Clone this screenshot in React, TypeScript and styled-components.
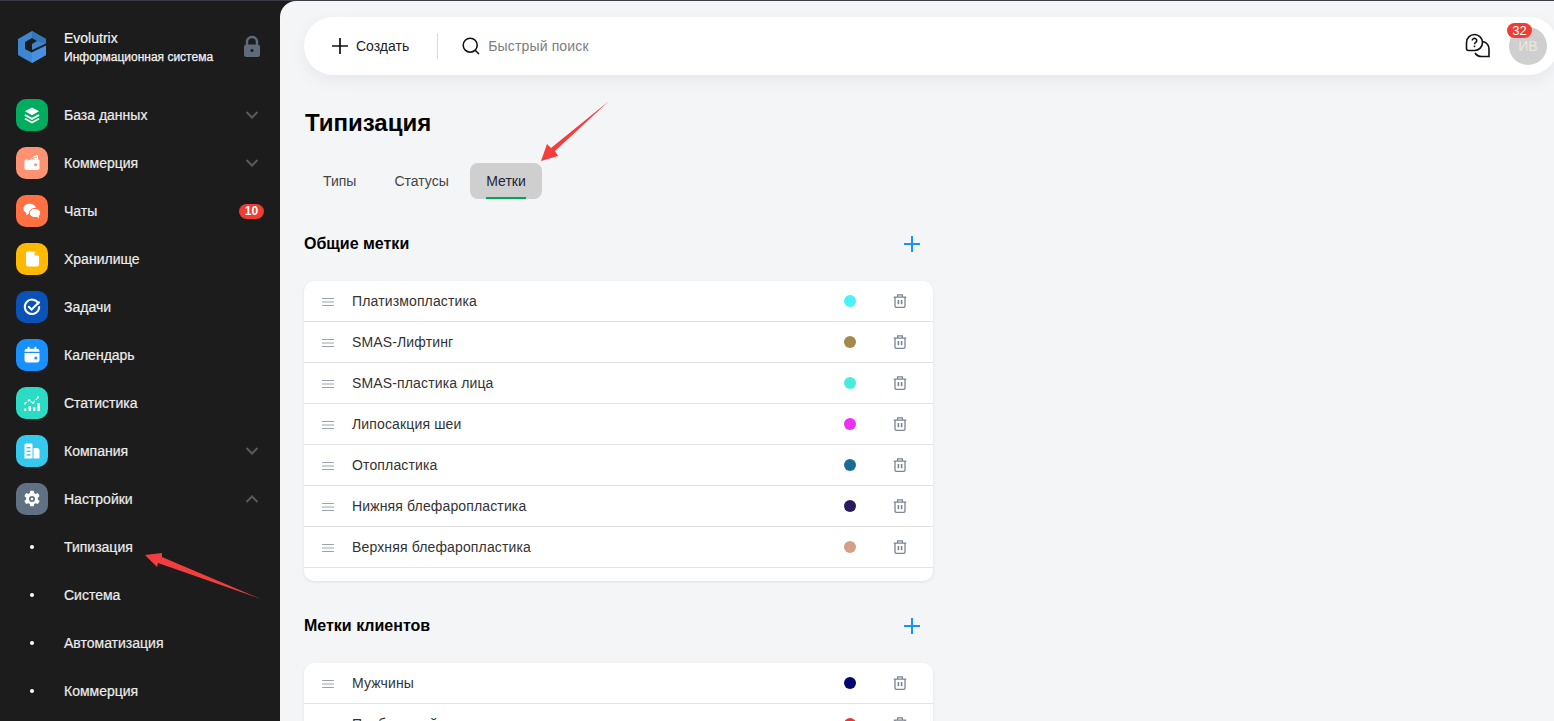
import React from "react";
import styled, { createGlobalStyle } from "styled-components";

const Global = createGlobalStyle`
  html, body { margin: 0; padding: 0; height: 721px; overflow: hidden; background: #1c1c1c; }
  body { font-family: "Liberation Sans", Arial, sans-serif; }
  #root { height: 721px; overflow: hidden; }
  * { box-sizing: border-box; }
`;

const Page = styled.div`
  position: relative;
  display: flex;
  width: 1554px;
  height: 721px;
  overflow: hidden;
  background: #1c1c1c;
  border-top: 1px solid #3b3b45;
`;

const Sidebar = styled.aside`
  flex: 0 0 280px;
  display: flex;
  flex-direction: column;
  padding: 28px 16px 0;
  color: #f2f2f2;
`;

const Brand = styled.div`
  display: flex;
  align-items: center;
  height: 36px;
  margin-bottom: 26px;
`;

const LogoSlot = styled.div`
  flex: 0 0 48px;
  display: flex;
  align-items: center;
`;

const BrandText = styled.div`
  flex: 1;
  display: flex;
  flex-direction: column;
  gap: 4px;
`;

const BrandName = styled.div`
  font-size: 14px;
  line-height: 16px;
  -webkit-text-stroke: 0.2px #f2f2f2;
`;

const BrandSub = styled.div`
  font-size: 12px;
  line-height: 15px;
  -webkit-text-stroke: 0.25px #f2f2f2;
`;

const Nav = styled.nav`
  display: flex;
  flex-direction: column;
`;

const NavRow = styled.div`
  display: flex;
  align-items: center;
  height: 48px;
`;

const IconTile = styled.div<{ $bg: string }>`
  flex: 0 0 32px;
  width: 32px;
  height: 32px;
  margin-right: 16px;
  border-radius: 10px;
  display: flex;
  align-items: center;
  justify-content: center;
  background: ${(p) => p.$bg};
`;

const Bullet = styled.div`
  flex: 0 0 48px;
  display: flex;
  justify-content: center;
  padding-right: 16px;
  &::before {
    content: "";
    width: 4px;
    height: 4px;
    border-radius: 50%;
    background: #fff;
  }
`;

const NavLabel = styled.span`
  flex: 1;
  font-size: 14px;
  color: #ececec;
  -webkit-text-stroke: 0.2px #ececec;
`;

const Chevron = styled.svg`
  width: 16px;
  height: 16px;
  margin-right: 4px;
  fill: none;
  stroke: #5a5a5a;
  stroke-width: 2;
`;

const CountBadge = styled.span`
  min-width: 25px;
  height: 15px;
  border-radius: 8px;
  background: #f03c32;
  color: #fff;
  font-size: 12px;
  font-weight: 700;
  line-height: 15px;
  text-align: center;
`;

const Main = styled.main`
  flex: 1;
  min-width: 0;
  background: #f4f5f7;
  border-top-left-radius: 16px;
  padding: 16px 0 0 24px;
`;

const TopBar = styled.header`
  display: flex;
  align-items: center;
  height: 58px;
  margin-right: -4px;
  padding: 0 0 0 28px;
  background: #fff;
  border-radius: 29px;
  box-shadow: 0 6px 16px rgba(60, 70, 90, 0.07);
`;

const CreateButton = styled.div`
  display: flex;
  align-items: center;
  gap: 8px;
  font-size: 14px;
  color: #1c1c1c;
`;

const Divider = styled.div`
  width: 1px;
  height: 26px;
  margin: 0 24px 0 28px;
  background: #dcdcdc;
`;

const SearchText = styled.span`
  flex: 1;
  margin-left: 8px;
  font-size: 14px;
  letter-spacing: 0.15px;
  color: #7d7d7d;
`;

const HelpIcon = styled.svg`
  width: 26px;
  height: 26px;
  margin-right: 18px;
  fill: none;
  stroke: #111;
  stroke-width: 1.6;
`;

const Avatar = styled.div`
  position: relative;
  width: 38px;
  height: 38px;
  margin-right: 11px;
  border-radius: 50%;
  background: #cfcfcf;
  color: #ece7d8;
  font-size: 14px;
  display: flex;
  align-items: center;
  justify-content: center;
`;

const AvatarBadge = styled.span`
  position: absolute;
  top: -4px;
  left: -2px;
  width: 25px;
  height: 15px;
  border-radius: 8px;
  background: #f03c32;
  color: #fff;
  font-size: 13px;
  line-height: 15px;
  text-align: center;
`;

const Title = styled.h1`
  margin: 33px 0 0 1px;
  font-size: 24px;
  line-height: 30px;
  font-weight: 700;
  color: #000;
`;

const Tabs = styled.div`
  display: flex;
  margin: 25px 0 0 2px;
`;

const Tab = styled.div<{ $active?: boolean }>`
  position: relative;
  height: 36px;
  padding: 0 ${(p) => (p.$active ? "16.5px" : "17px")};
  border-radius: 8px;
  font-size: 14px;
  line-height: 36px;
  color: ${(p) => (p.$active ? "#1d2433" : "#444")};
  background: ${(p) => (p.$active ? "#cfcfcf" : "transparent")};
  margin-right: ${(p) => (p.$active ? 0 : "4px")};
  ${(p) =>
    p.$active
      ? `&::after { content: ""; position: absolute; left: 16px; right: 16px; bottom: 0; height: 2px; background: #00a85a; }`
      : ""}
`;

const Section = styled.section`
  width: 629px;
  margin-top: 35px;
`;

const SectionHead = styled.div`
  display: flex;
  align-items: center;
  justify-content: space-between;
  height: 20px;
  padding-right: 12px;
`;

const SectionTitle = styled.h2`
  margin: 0;
  font-size: 16px;
  line-height: 20px;
  font-weight: 700;
  color: #000;
`;

const PlusIcon = styled.svg`
  width: 18px;
  height: 18px;
  fill: none;
  stroke: #1890ff;
  stroke-width: 2;
`;

const Card = styled.div`
  margin-top: 27px;
  background: #fff;
  border-radius: 10px;
  box-shadow: 0 1px 3px rgba(40, 50, 70, 0.1);
  padding-bottom: 13px;
`;

const Row = styled.div`
  display: flex;
  align-items: center;
  height: 41px;
  border-bottom: 1px solid #e2e2e2;
  padding-left: 18px;
`;

const DragIcon = styled.svg`
  flex: 0 0 12px;
  width: 12px;
  height: 10px;
  margin: 1px 18px 0 0;
  stroke: #9aa4b2;
  stroke-width: 1;
`;

const RowLabel = styled.span`
  flex: 1;
  font-size: 14px;
  letter-spacing: 0.14px;
  color: #333;
`;

const Dot = styled.span<{ $c: string }>`
  width: 12px;
  height: 12px;
  border-radius: 50%;
  background: ${(p) => p.$c};
  margin-right: 37px;
`;

const TrashIcon = styled.svg`
  width: 14px;
  height: 14px;
  margin-right: 26px;
  fill: none;
  stroke: #7b8594;
  stroke-width: 1.3;
`;

const ArrowLayer = styled.svg`
  position: absolute;
  left: 0;
  top: 0;
  width: 1554px;
  height: 721px;
  pointer-events: none;
`;

const W = "#fff";
const Glyph = ({ children }: { children: React.ReactNode }) => (
  <svg width="20" height="20" viewBox="0 0 20 20">{children}</svg>
);

const icons = {
  db: (
    <Glyph>
      <path d="M10 2.5 17 6.3 10 10.2 3 6.3Z" fill={W} />
      <path d="M3.4 9.2 10 12.8l6.6-3.6 1 1.5L10 15 2.4 10.7Z" fill={W} />
      <path d="M3.4 12.9 10 16.4l6.6-3.5 1 1.4L10 18.5 2.4 14.3Z" fill={W} />
    </Glyph>
  ),
  wallet: (
    <Glyph>
      <path d="M7 6.5 14.2 2.2c.9-.5 1.8.1 1.8 1V6.5Z" fill={W} />
      <path d="M4.5 6.5h11.5c1 0 1.5.6 1.5 1.5v7c0 1.2-.8 2-2 2H4.5c-1.2 0-2-.8-2-2V8.5c0-1.2.8-2 2-2Z" fill={W} />
      <path d="M5.5 7.1 14.8 4.2" stroke="#ff9273" strokeWidth="1" />
      <circle cx="13.6" cy="11.8" r="1.5" fill="#ff9273" />
    </Glyph>
  ),
  chat: (
    <Glyph>
      <ellipse cx="7.7" cy="7.7" rx="6.3" ry="5" fill={W} />
      <path d="M4.5 11 4 14.2 8 12Z" fill={W} />
      <ellipse cx="13" cy="12" rx="5.7" ry="4.6" fill={W} stroke="#ff7043" strokeWidth="1" />
      <path d="M15 15.5l1.6 2.3.2-3.4Z" fill={W} />
    </Glyph>
  ),
  file: (
    <Glyph>
      <path d="M5.5 2.5h6.5l4.5 4.5v8.5c0 1.2-.8 2-2 2h-9c-1.2 0-2-.8-2-2v-11c0-1.5.6-2 2-2Z" fill={W} transform="translate(.5 0)" />
      <path d="M12.5 3v3.6h3.6Z" fill="#ffb900" />
    </Glyph>
  ),
  task: (
    <Glyph>
      <path d="M16.4 6.5A7.2 7.2 0 1 0 17.2 10" fill="none" stroke={W} strokeWidth="2" strokeLinecap="round" />
      <path d="M6.8 9.8 9.6 12.5 17 5.2" fill="none" stroke={W} strokeWidth="2" strokeLinecap="round" />
    </Glyph>
  ),
  cal: (
    <Glyph>
      <path d="M2.5 8h15v7c0 1.6-1 2.5-2.5 2.5H5c-1.5 0-2.5-.9-2.5-2.5Z" fill={W} />
      <path d="M5 3.8h10c1.5 0 2.5.9 2.5 2.5v.4h-15v-.4c0-1.6 1-2.5 2.5-2.5Z" fill={W} />
      <rect x="5.6" y="1.8" width="2" height="3.4" rx="1" fill={W} />
      <rect x="12.4" y="1.8" width="2" height="3.4" rx="1" fill={W} />
      <circle cx="13.8" cy="13" r="1.5" fill="#1890ff" />
    </Glyph>
  ),
  stat: (
    <Glyph>
      <path d="M3 10.5 7.3 7l3.6 3 5-5.5" fill="none" stroke={W} strokeWidth="1.1" strokeDasharray="2.2 1.4" />
      <circle cx="3" cy="10.5" r="1.1" fill={W} />
      <circle cx="7.3" cy="7" r="1.1" fill={W} />
      <circle cx="10.9" cy="10" r="1.1" fill={W} />
      <circle cx="16" cy="4.4" r="1.1" fill={W} />
      <rect x="2" y="15.4" width="2.4" height="2.6" rx=".6" fill={W} />
      <rect x="6.6" y="13" width="2.4" height="5" rx=".6" fill={W} />
      <rect x="11" y="14" width="2.4" height="4" rx=".6" fill={W} />
      <rect x="15.4" y="10" width="2.4" height="8" rx=".6" fill={W} />
    </Glyph>
  ),
  comp: (
    <Glyph>
      <path d="M4.5 2.5H9c1 0 1.5.6 1.5 1.5v13.5h-8V4c0-1 .8-1.5 2-1.5Z" fill={W} />
      <rect x="4.6" y="6" width="3.8" height="1.4" fill="#36c9ee" />
      <rect x="4.6" y="9.6" width="3.8" height="1.4" fill="#36c9ee" />
      <rect x="4.6" y="13.2" width="3.8" height="1.4" fill="#36c9ee" />
      <path d="M11.5 7H15c1.6 0 2.5 1 2.5 2.5v8h-6Z" fill={W} />
    </Glyph>
  ),
  gear: (
    <Glyph>
      <path
        fillRule="evenodd"
        d="M8.3 1.8h3.4l.5 2.3 1.5.8 2.2-.8 1.7 3-1.8 1.6v1.7l1.8 1.6-1.7 3-2.2-.8-1.5.8-.5 2.3H8.3l-.5-2.3-1.5-.8-2.2.8-1.7-3 1.8-1.6V8.7L2.4 7.1l1.7-3 2.2.8 1.5-.8ZM10 7a3 3 0 1 0 0 6 3 3 0 0 0 0-6Z"
        fill={W}
      />
      <circle cx="10" cy="10" r="1.3" fill={W} />
    </Glyph>
  ),
};

const Down = () => (
  <Chevron viewBox="0 0 16 16"><path d="M2.5 5 8 10.5 13.5 5" /></Chevron>
);
const Up = () => (
  <Chevron viewBox="0 0 16 16"><path d="M2.5 11 8 5.5 13.5 11" /></Chevron>
);

const Drag = () => (
  <DragIcon viewBox="0 0 12 10">
    <path d="M0 1.5h12M0 5h12M0 8.5h12" />
  </DragIcon>
);

const Trash = () => (
  <TrashIcon viewBox="0 0 14 14">
    <path d="M.7 3.2h12.6M4.6 3V.9h4.8V3M2 3.2v8.8c0 .9.6 1.4 1.5 1.4h7c.9 0 1.5-.5 1.5-1.4V3.2" />
    <path d="M5.4 6v4.2M8.6 6v4.2" strokeWidth="1.6" />
  </TrashIcon>
);

const Plus = () => (
  <PlusIcon viewBox="0 0 18 18"><path d="M9 1v16M1 9h16" /></PlusIcon>
);

const nav: { label: string; bg: string; icon: React.ReactNode; chev?: "d" | "u"; badge?: string }[] = [
  { label: "База данных", bg: "#00ad5f", icon: icons.db, chev: "d" },
  { label: "Коммерция", bg: "#ff9273", icon: icons.wallet, chev: "d" },
  { label: "Чаты", bg: "#ff7043", icon: icons.chat, badge: "10" },
  { label: "Хранилище", bg: "#ffb900", icon: icons.file },
  { label: "Задачи", bg: "#0b52b8", icon: icons.task },
  { label: "Календарь", bg: "#1890ff", icon: icons.cal },
  { label: "Статистика", bg: "#2bdcc4", icon: icons.stat },
  { label: "Компания", bg: "#36c9ee", icon: icons.comp, chev: "d" },
  { label: "Настройки", bg: "#5f7183", icon: icons.gear, chev: "u" },
];

const sub = ["Типизация", "Система", "Автоматизация", "Коммерция"];

const common: [string, string][] = [
  ["Платизмопластика", "#48f2f7"],
  ["SMAS-Лифтинг", "#a48a4a"],
  ["SMAS-пластика лица", "#48ecdf"],
  ["Липосакция шеи", "#ec2ff0"],
  ["Отопластика", "#1a6c96"],
  ["Нижняя блефаропластика", "#2c1a5e"],
  ["Верхняя блефаропластика", "#d49f88"],
];

const clients: [string, string][] = [
  ["Мужчины", "#06066e"],
  ["Проблемный", "#ee3333"],
];

const Rows = ({ items }: { items: [string, string][] }) => (
  <>
    {items.map(([t, c]) => (
      <Row key={t}>
        <Drag />
        <RowLabel>{t}</RowLabel>
        <Dot $c={c} />
        <Trash />
      </Row>
    ))}
  </>
);

export default function App() {
  return (
    <Page>
      <Global />
      <Sidebar>
        <Brand>
          <LogoSlot>
            <svg width="32" height="34" viewBox="0 0 32 34">
              <path d="M16 1 30 9v16l-14 8-14-8V9Z" fill="#3f86d0" />
              <path d="M16 1 30 9v5l-9-3-5-3Z" fill="#3178b8" />
              <path d="M16 22.5 30 15.5V25l-14 8Z" fill="#4a90e2" />
              <path d="M9 12 16 8 21 11 16 14V20L30 13.5V15.5L15.5 22.5 9 19Z" fill="#1c1c1c" />
            </svg>
          </LogoSlot>
          <BrandText>
            <BrandName>Evolutrix</BrandName>
            <BrandSub>Информационная система</BrandSub>
          </BrandText>
          <svg width="20" height="24" viewBox="0 0 20 24" style={{ marginRight: 2 }}>
            <path d="M5 10V7a5 5 0 0 1 10 0v3" fill="none" stroke="#5f6b7a" strokeWidth="2.4" />
            <rect x="2" y="9.5" width="16" height="12.5" rx="2.5" fill="#5f6b7a" />
            <circle cx="10" cy="15.5" r="1.6" fill="#1c1c1c" />
          </svg>
        </Brand>
        <Nav>
          {nav.map((n) => (
            <NavRow key={n.label}>
              <IconTile $bg={n.bg}>{n.icon}</IconTile>
              <NavLabel>{n.label}</NavLabel>
              {n.chev === "d" && <Down />}
              {n.chev === "u" && <Up />}
              {n.badge && <CountBadge>{n.badge}</CountBadge>}
            </NavRow>
          ))}
          {sub.map((s) => (
            <NavRow key={s}>
              <Bullet />
              <NavLabel>{s}</NavLabel>
            </NavRow>
          ))}
        </Nav>
      </Sidebar>
      <Main>
        <TopBar>
          <CreateButton>
            <svg width="16" height="16" viewBox="0 0 16 16" fill="none" stroke="#111" strokeWidth="1.7">
              <path d="M8 0v16M0 8h16" />
            </svg>
            Создать
          </CreateButton>
          <Divider />
          <svg width="18" height="18" viewBox="0 0 18 18" fill="none" stroke="#111" strokeWidth="1.6">
            <circle cx="8.2" cy="8.2" r="7" />
            <path d="M13.2 13.2 17 17" />
          </svg>
          <SearchText>Быстрый поиск</SearchText>
          <HelpIcon viewBox="0 0 26 26">
            <path d="M1.5 9.5a8 8 0 0 1 16 0c0 4.5-3.5 8-8 8H3.5c-1.2 0-2-.8-2-2Z" />
            <path d="M18 8.5c3.5 1.2 6 4 6 7.5v7.5h-7c-3 0-5.5-1-7-3.5" />
            <path d="M7.3 7.5a2.2 2.2 0 1 1 3.4 1.9c-.8.5-1.2 1-1.2 1.9" />
            <path d="M9.5 12.6v1.6" />
          </HelpIcon>
          <Avatar>
            ИВ
            <AvatarBadge>32</AvatarBadge>
          </Avatar>
        </TopBar>
        <Title>Типизация</Title>
        <Tabs>
          <Tab>Типы</Tab>
          <Tab>Статусы</Tab>
          <Tab $active>Метки</Tab>
        </Tabs>
        <Section>
          <SectionHead>
            <SectionTitle>Общие метки</SectionTitle>
            <Plus />
          </SectionHead>
          <Card>
            <Rows items={common} />
          </Card>
        </Section>
        <Section>
          <SectionHead>
            <SectionTitle>Метки клиентов</SectionTitle>
            <Plus />
          </SectionHead>
          <Card>
            <Rows items={clients} />
          </Card>
        </Section>
      </Main>
      <ArrowLayer viewBox="0 0 1554 721">
        <path d="M261 598 162 556 162 552 145 554 157 566 158 562Z" fill="#f43d3d" />
        <path d="M609 100 555 150 558 155 541 160 547 143 551 147Z" fill="#f43d3d" />
      </ArrowLayer>
    </Page>
  );
}
